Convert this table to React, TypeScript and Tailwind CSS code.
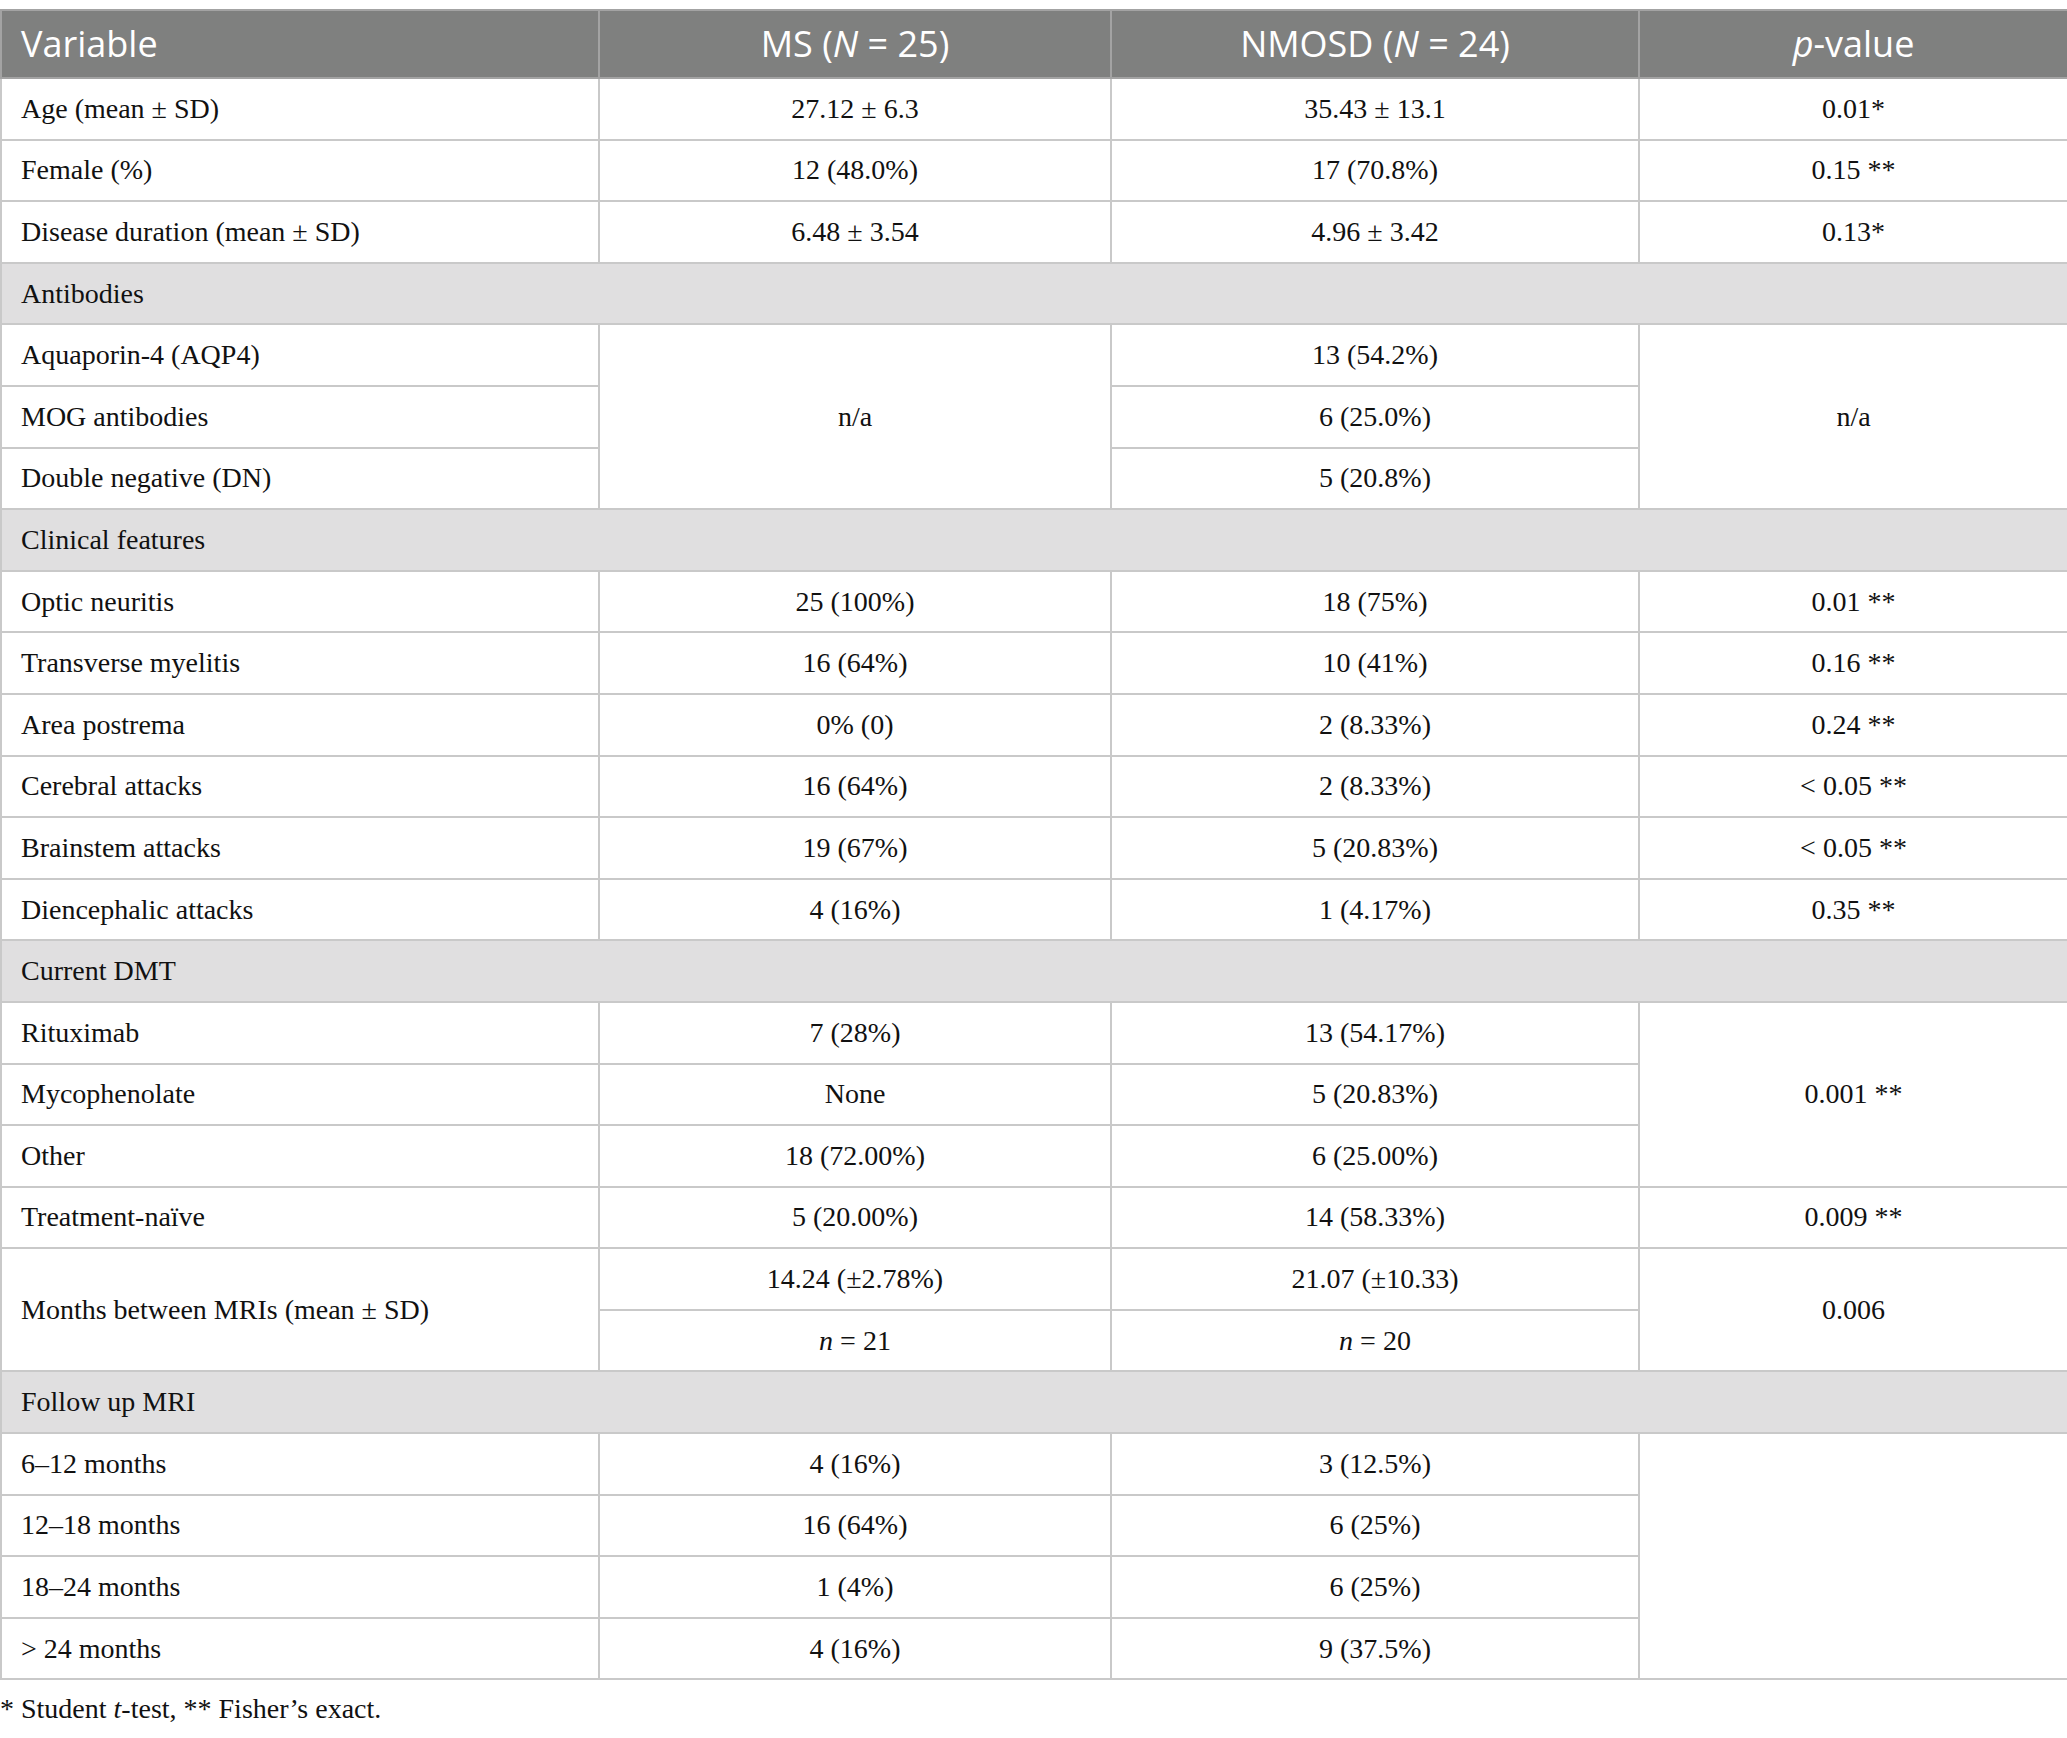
import React from "react";

const serif = "font-['Liberation_Serif','Times_New_Roman',serif]";
const td = "border-2 border-[#c9c9c9] h-[61.6px] p-0 text-[28px] text-[#111111] align-middle";
const tdL = `${td} text-left pl-[19px]`;
const tdC = `${td} text-center`;
const th = "border-2 border-[#a3a3a3] h-[68px] p-0 font-normal";

type Row = [string, string, string, string];

const simple = (rows: Row[]) =>
  rows.map((r, i) => (
    <tr key={r[0] + i}>
      <td className={tdL}>{r[0]}</td>
      <td className={tdC}>{r[1]}</td>
      <td className={tdC}>{r[2]}</td>
      <td className={tdC}>{r[3]}</td>
    </tr>
  ));

const Section = ({ label }: { label: string }) => (
  <tr className="bg-[#e0dfe0]">
    <td colSpan={4} className={tdL}>
      {label}
    </td>
  </tr>
);

export default function App() {
  return (
    <div className={`w-[2067px] min-h-[1738px] bg-white pt-[9px] ${serif}`}>
      <table className="w-[2067px] table-fixed border-collapse">
        <colgroup>
          <col className="w-[598px]" />
          <col className="w-[512px]" />
          <col className="w-[528px]" />
          <col className="w-[429px]" />
        </colgroup>
        <thead>
          <tr className="bg-[#7f807f] text-white font-['Open_Sans','Noto_Sans',sans-serif] text-[36px]">
            <th className={`${th} text-left pl-[19px]`}>Variable</th>
            <th className={`${th} text-center`}>
              MS (<i>N</i> = 25)
            </th>
            <th className={`${th} text-center`}>
              NMOSD (<i>N</i> = 24)
            </th>
            <th className={`${th} text-center`}>
              <i>p</i>-value
            </th>
          </tr>
        </thead>
        <tbody>
          {simple([
            ["Age (mean ± SD)", "27.12 ± 6.3", "35.43 ± 13.1", "0.01*"],
            ["Female (%)", "12 (48.0%)", "17 (70.8%)", "0.15 **"],
            ["Disease duration (mean ± SD)", "6.48 ± 3.54", "4.96 ± 3.42", "0.13*"],
          ])}
          <Section label="Antibodies" />
          <tr>
            <td className={tdL}>Aquaporin-4 (AQP4)</td>
            <td className={tdC} rowSpan={3}>n/a</td>
            <td className={tdC}>13 (54.2%)</td>
            <td className={tdC} rowSpan={3}>n/a</td>
          </tr>
          <tr>
            <td className={tdL}>MOG antibodies</td>
            <td className={tdC}>6 (25.0%)</td>
          </tr>
          <tr>
            <td className={tdL}>Double negative (DN)</td>
            <td className={tdC}>5 (20.8%)</td>
          </tr>
          <Section label="Clinical features" />
          {simple([
            ["Optic neuritis", "25 (100%)", "18 (75%)", "0.01 **"],
            ["Transverse myelitis", "16 (64%)", "10 (41%)", "0.16 **"],
            ["Area postrema", "0% (0)", "2 (8.33%)", "0.24 **"],
            ["Cerebral attacks", "16 (64%)", "2 (8.33%)", "< 0.05 **"],
            ["Brainstem attacks", "19 (67%)", "5 (20.83%)", "< 0.05 **"],
            ["Diencephalic attacks", "4 (16%)", "1 (4.17%)", "0.35 **"],
          ])}
          <Section label="Current DMT" />
          <tr>
            <td className={tdL}>Rituximab</td>
            <td className={tdC}>7 (28%)</td>
            <td className={tdC}>13 (54.17%)</td>
            <td className={tdC} rowSpan={3}>0.001 **</td>
          </tr>
          <tr>
            <td className={tdL}>Mycophenolate</td>
            <td className={tdC}>None</td>
            <td className={tdC}>5 (20.83%)</td>
          </tr>
          <tr>
            <td className={tdL}>Other</td>
            <td className={tdC}>18 (72.00%)</td>
            <td className={tdC}>6 (25.00%)</td>
          </tr>
          {simple([["Treatment-naïve", "5 (20.00%)", "14 (58.33%)", "0.009 **"]])}
          <tr>
            <td className={tdL} rowSpan={2}>Months between MRIs (mean ± SD)</td>
            <td className={tdC}>14.24 (±2.78%)</td>
            <td className={tdC}>21.07 (±10.33)</td>
            <td className={tdC} rowSpan={2}>0.006</td>
          </tr>
          <tr>
            <td className={tdC}>
              <i>n</i> = 21
            </td>
            <td className={tdC}>
              <i>n</i> = 20
            </td>
          </tr>
          <Section label="Follow up MRI" />
          <tr>
            <td className={tdL}>6–12 months</td>
            <td className={tdC}>4 (16%)</td>
            <td className={tdC}>3 (12.5%)</td>
            <td className={tdC} rowSpan={4}></td>
          </tr>
          <tr>
            <td className={tdL}>12–18 months</td>
            <td className={tdC}>16 (64%)</td>
            <td className={tdC}>6 (25%)</td>
          </tr>
          <tr>
            <td className={tdL}>18–24 months</td>
            <td className={tdC}>1 (4%)</td>
            <td className={tdC}>6 (25%)</td>
          </tr>
          <tr>
            <td className={tdL}>&gt; 24 months</td>
            <td className={tdC}>4 (16%)</td>
            <td className={tdC}>9 (37.5%)</td>
          </tr>
        </tbody>
      </table>
      <p className="mt-[11px] text-[28px] text-[#111111] leading-[36px]">
        * Student <i>t</i>-test, ** Fisher’s exact.
      </p>
    </div>
  );
}
